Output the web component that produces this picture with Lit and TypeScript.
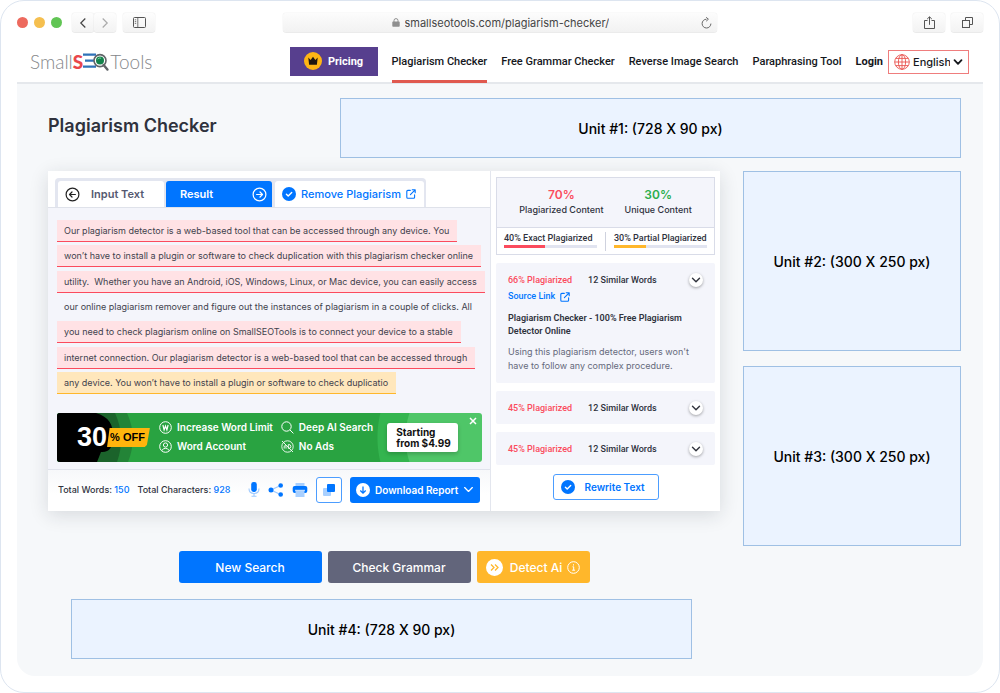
import { LitElement, html, css, svg } from "lit";
import { customElement, property } from "lit/decorators.js";
import { classMap } from "lit/directives/class-map.js";

type Mark = "exact" | "partial" | "none";

const lines: { text: string; mark: Mark }[] = [
  { text: "Our plagiarism detector is a web-based tool that can be accessed through any device. You", mark: "exact" },
  { text: "won’t have to install a plugin or software to check duplication with this plagiarism checker online", mark: "exact" },
  { text: "utility.  Whether you have an Android, iOS, Windows, Linux, or Mac device, you can easily access", mark: "exact" },
  { text: "our online plagiarism remover and figure out the instances of plagiarism in a couple of clicks. All", mark: "none" },
  { text: "you need to check plagiarism online on SmallSEOTools is to connect your device to a stable", mark: "exact" },
  { text: "internet connection. Our plagiarism detector is a web-based tool that can be accessed through", mark: "exact" },
  { text: "any device. You won’t have to install a plugin or software to check duplicatio", mark: "partial" },
];

const chevron = (w = 10, width = 1.6) => html`<svg width=${w} height=${w} viewBox="0 0 10 10" fill="none" stroke="currentColor" stroke-width=${width} stroke-linecap="round" stroke-linejoin="round" aria-hidden="true"><path d="M1.5 3.2 5 6.8 8.5 3.2" /></svg>`;

const checkDisc = html`<svg width="14" height="14" viewBox="0 0 14 14" aria-hidden="true"><circle cx="7" cy="7" r="7" fill="#0075ff" /><path d="M4.4 7.2 6.2 9 9.7 5.5" fill="none" stroke="#fff" stroke-width="1.4" stroke-linecap="round" stroke-linejoin="round" /></svg>`;

const arrowDisc = (left: boolean) => html`<svg width="15" height="15" viewBox="0 0 15 15" fill="none" stroke="currentColor" stroke-width="1.2" stroke-linecap="round" stroke-linejoin="round" aria-hidden="true"><circle cx="7.5" cy="7.5" r="6.4" />${left ? svg`<path d="M10.4 7.5H4.6M7 5 4.5 7.5 7 10" />` : svg`<path d="M4.6 7.5h5.8M8 5l2.5 2.5L8 10" />`}</svg>`;

const external = html`<svg width="10" height="10" viewBox="0 0 10 10" fill="none" stroke="currentColor" stroke-width="1.1" stroke-linecap="round" stroke-linejoin="round" aria-hidden="true"><path d="M4.3 1.4H1.8a1 1 0 0 0-1 1v5.8a1 1 0 0 0 1 1h5.8a1 1 0 0 0 1-1V5.7M6.2.8h3v3M9.1.9 4.4 5.6" /></svg>`;

@customElement("ad-unit")
export class AdUnit extends LitElement {
  @property() label = "";
  static styles = css`
    :host {
      display: flex;
      align-items: center;
      justify-content: center;
      box-sizing: border-box;
      border: 1px solid #9fc0e4;
      background: #ebf3ff;
      color: #000;
      font-size: 14px;
      font-weight: 500;
    }
  `;
  render() {
    return html`<span>${this.label}</span>`;
  }
}

@customElement("match-card")
export class MatchCard extends LitElement {
  @property() percent = "";
  @property({ type: Boolean }) open = false;
  static styles = css`
    :host {
      display: block;
      background: #f4f5fb;
      border-radius: 2px;
      padding: 5px 12px;
      font-size: 9px;
      color: #2f323d;
    }
    .head {
      display: flex;
      align-items: center;
      gap: 16px;
      min-height: 23px;
      font-family: Roboto, Inter, sans-serif;
      font-weight: 500;
      white-space: nowrap;
    }
    .percent { color: #fb4b5d; }
    .toggle {
      margin-left: auto;
      width: 14px;
      height: 14px;
      padding: 0;
      border: 0;
      border-radius: 50%;
      background: #fff;
      color: #33363f;
      box-shadow: 0 1px 3px rgba(0, 0, 0, 0.35);
      display: grid;
      place-items: center;
    }
    a {
      display: flex;
      align-items: center;
      gap: 5px;
      width: max-content;
      color: #0075ff;
      text-decoration: none;
      font-family: Roboto, Inter, sans-serif;
      font-weight: 500;
      line-height: 11px;
    }
    h3 {
      margin: 10px 0 0;
      font-family: Roboto, Inter, sans-serif;
      font-size: 9px;
      line-height: 13px;
      font-weight: 600;
    }
    p {
      margin: 7px 0 5px;
      font-size: 9px;
      line-height: 14px;
      color: #666a7c;
    }
  `;
  render() {
    return html`
      <div class="head">
        <span class="percent">${this.percent} Plagiarized</span>
        <span>12 Similar Words</span>
        <button class="toggle" aria-label="Toggle details">${chevron(10, 1.4)}</button>
      </div>
      ${this.open
        ? html`<a href="#source">Source Link ${external}</a>
            <h3>Plagiarism Checker - 100% Free Plagiarism Detector Online</h3>
            <p>Using this plagiarism detector, users won't have to follow any complex procedure.</p>`
        : null}
    `;
  }
}

@customElement("app-root")
export class AppRoot extends LitElement {
  static styles = css`
    :host {
      display: block;
      font-family: Inter, "Open Sans", sans-serif;
      color: #2f323d;
    }
    * { box-sizing: border-box; }
    button, input, select { font-family: inherit; }
    button { margin: 0; white-space: nowrap; }
    svg { flex: none; display: block; }
    .frame {
      min-height: 100vh;
      display: flex;
      flex-direction: column;
      border: 1px solid #dde5f0;
      border-radius: 24px;
      background: #fff;
      padding: 12px 16px 16px;
    }

    .toolbar {
      display: grid;
      grid-template-columns: 1fr 45% 1fr;
      align-items: center;
      height: 19px;
    }
    .side { display: flex; align-items: center; }
    .dots { display: flex; gap: 6px; margin-right: 10px; }
    .dot { width: 11px; height: 11px; border-radius: 50%; background: #ed6a5e; }
    .dot.amber { background: #f5bf4f; }
    .dot.green { background: #61c554; }
    .chrome {
      width: 32px;
      height: 19px;
      padding: 0;
      border: 0;
      border-radius: 3px;
      background: linear-gradient(#fdfdfd, #f3f3f3);
      box-shadow: 0 0 1px rgba(0, 0, 0, 0.25), 0 1px 0 rgba(0, 0, 0, 0.06);
      color: #555;
      display: grid;
      place-items: center;
    }
    .chrome.nav { width: 22px; }
    .chrome.panel { margin-left: 7px; }
    .end { justify-content: flex-end; gap: 6px; }
    .address {
      display: flex;
      align-items: center;
      height: 19px;
      padding: 0 5px;
      border-radius: 3px;
      background: linear-gradient(#fcfcfc, #f2f2f2);
      box-shadow: 0 0 1px rgba(0, 0, 0, 0.2), 0 1px 0 rgba(0, 0, 0, 0.06);
    }
    .location { flex: 1; display: flex; justify-content: center; align-items: center; gap: 5px; padding-left: 11px; }
    .location input {
      width: 204px;
      padding: 0;
      border: 0;
      outline: 0;
      background: none;
      color: #454545;
      font-size: 11px;
    }
    .reload { border: 0; background: none; padding: 0; color: #666; }

    header {
      display: flex;
      align-items: stretch;
      height: 52px;
      padding: 0 14px 0 13px;
      border-bottom: 2px solid #e5e8ec;
    }
    .logo {
      display: flex;
      align-items: center;
      padding-top: 8px;
      color: #85878a;
      font-family: Lato, sans-serif;
      font-weight: 300;
      font-size: 19px;
      text-decoration: none;
      margin-right: auto;
    }
    .logo b { color: #e9474b; font-weight: 900; }
    nav { display: flex; align-items: center; gap: 14px; white-space: nowrap; }
    nav a {
      color: #15171c;
      font-family: Roboto, Inter, sans-serif;
      font-size: 11px;
      font-weight: 500;
      text-decoration: none;
      height: 52px;
      line-height: 61px;
    }
    nav a.active { border-bottom: 3px solid #e0594f; }
    nav a.login { font-weight: 700; }
    nav a.pricing {
      height: 29px;
      width: 88px;
      line-height: 29px;
      display: flex;
      align-items: center;
      justify-content: center;
      gap: 6px;
      background: #573f8e;
      color: #fff;
      font-weight: 700;
      margin-top: 8px;
    }
    .language {
      display: flex;
      align-items: center;
      gap: 3px;
      height: 24px;
      width: 81px;
      padding: 0 5px;
      margin: 9px 0 0 -9px;
      border: 1px solid #ef7d7d;
      color: #15171c;
    }
    .language select {
      appearance: none;
      flex: 1;
      min-width: 0;
      border: 0;
      padding: 0;
      background: none;
      color: inherit;
      font-size: 11px;
      font-weight: 500;
    }

    main {
      flex: 1;
      background: #f6f8fa;
      border-radius: 0 0 18px 18px;
      padding: 14px 22px 17px 31px;
    }
    .top { display: flex; margin-bottom: 13px; }
    h1 { flex: 0 0 292px; margin: 0; font-size: 18px; line-height: 56px; font-weight: 600; }
    .wide { height: 60px; }
    .top .wide { flex: 1; }
    .bottom { margin: 16px 28px 0 23px; }
    .columns { display: grid; grid-template-columns: minmax(0, 1fr) 218px; gap: 23px; }
    .rail { display: flex; flex-direction: column; gap: 15px; }
    .box { height: 180px; }

    .checker {
      display: grid;
      grid-template-columns: minmax(0, 1fr) 230px;
      background: #fff;
      box-shadow: 0 4px 18px rgba(30, 35, 50, 0.14);
    }
    .editor { display: flex; flex-direction: column; }
    .tabs { padding: 7px 7px 0; border-bottom: 1px solid #dfe2ea; display: flex; }
    .tabset {
      display: flex;
      gap: 2px;
      padding: 3px 2px 0 3px;
      background: #e3e6f0;
      border-radius: 4px 4px 0 0;
    }
    .tab {
      display: flex;
      align-items: center;
      height: 26px;
      width: 106px;
      padding: 0 7px;
      border: 0;
      border-radius: 3px 3px 0 0;
      background: #fff;
      color: #555970;
      font-size: 11px;
      font-weight: 600;
      gap: 11px;
    }
    .tab.input svg { color: #222; }
    .tab.selected { background: #0075ff; color: #fff; justify-content: space-between; padding: 0 5px 0 14px; }
    .tab.remove { width: 149px; margin-left: 1px; gap: 5px; color: #0075ff; font-weight: 500; }
    .text { flex: 1; background: #f4f5fb; padding: 12px 8px 7px 9px; }
    .lines {
      display: flex;
      flex-direction: column;
      align-items: flex-start;
      justify-content: space-between;
      min-height: 174px;
    }
    .line {
      height: 22px;
      line-height: 21px;
      padding: 0 8px 0 7px;
      font-size: 9px;
      color: #3f424d;
      white-space: pre;
      border-bottom: 1px solid transparent;
    }
    .line.exact { background: #ffe2e5; border-color: #fb4b5d; }
    .line.partial { background: #ffe7bc; border-color: #ffb72b; }

    .banner {
      position: relative;
      display: flex;
      align-items: center;
      height: 49px;
      margin-top: 19px;
      border-radius: 3px;
      overflow: hidden;
      color: #fff;
      background:
        radial-gradient(circle at 100% 50%, #4fc668 0 76px, #34b54f 77px 104px, transparent 105px),
        #29a341;
    }
    .shades { position: absolute; left: 0; top: 0; }
    .deal { position: relative; display: flex; align-items: center; width: 102px; padding-left: 20px; font-family: "Liberation Sans", sans-serif; font-weight: 700; }
    .deal .big { font-size: 27px; }
    .deal .off {
      padding: 0 5px 0 3px;
      line-height: 19px;
      font-size: 11px;
      color: #000;
      background: #ffb50d;
      clip-path: polygon(6% 0, 100% 0, 93% 90%, 88% 100%, 0 100%);
      white-space: nowrap;
    }
    .perks { position: relative; display: grid; grid-template-columns: auto auto; gap: 5px 8px; padding-bottom: 2px; font-size: 10px; font-weight: 600; white-space: nowrap; }
    .perk { display: flex; align-items: center; gap: 5px; height: 14px; }
    .price {
      position: relative;
      margin-left: 14px;
      width: 71px;
      height: 29px;
      padding: 0 0 0 9px;
      border: 0;
      border-radius: 3px;
      background: #fff;
      color: #111;
      font-size: 10px;
      line-height: 11px;
      font-weight: 700;
      text-align: left;
      box-shadow: 0 2px 4px rgba(0, 0, 0, 0.2);
    }
    .close { position: absolute; right: 4px; top: 3px; border: 0; background: none; color: #fff; padding: 0; }

    .status {
      display: flex;
      align-items: center;
      height: 42px;
      padding: 0 10px 2px;
      border-top: 1px solid #e0e3ec;
      background: linear-gradient(#f7f8fa, #fff 60%);
      font-size: 9px;
      font-weight: 500;
      white-space: nowrap;
    }
    .status .count + .count { margin-left: 8px; }
    .count b { color: #0075ff; font-weight: 500; }
    .tools { display: flex; align-items: center; gap: 8px; margin-left: auto; }
    .tool { border: 0; background: none; padding: 0; }
    .tool.boxed { width: 26px; height: 26px; display: grid; place-items: center; border: 1px solid #4c9dff; border-radius: 3px; background: #fff; }
    .download {
      display: flex;
      align-items: center;
      gap: 5px;
      width: 130px;
      height: 26px;
      padding: 0 6px;
      border: 0;
      border-radius: 3px;
      background: #0075ff;
      color: #fff;
      font-size: 10px;
      font-weight: 600;
    }
    .download svg:last-child { margin-left: auto; }

    .report { display: flex; flex-direction: column; border-left: 1px solid #e3e6ee; padding: 6px 5px 10px; }
    .summary { border: 1px solid #d9dce8; margin-bottom: 8px; }
    .totals { display: flex; justify-content: center; gap: 21px; height: 50px; padding-top: 8px; background: #f4f5fb; border-bottom: 1px solid #d9dce8; text-align: center; font-size: 9px; font-weight: 500; white-space: nowrap; }
    .totals strong { display: block; font-size: 12px; line-height: 17px; font-weight: 600; margin-bottom: 1px; }
    .red { color: #fb4b5d; }
    .green-text { color: #2bae4d; }
    .split { display: flex; height: 26px; padding: 4px 7px 3px; font-family: Roboto, Inter, sans-serif; font-size: 9px; font-weight: 500; white-space: nowrap; }
    .split > div { flex: 1; line-height: 13px; }
    .split > div + div { border-left: 1px solid #cfd2de; padding-left: 8px; }
    .split > div:first-child { padding-right: 8px; }
    .bar { height: 3px; background: #e1e4f0; }
    .fill { height: 3px; background: #fb4b5d; }
    .fill.amber { background: #ffb72b; }
    .matches { display: flex; flex-direction: column; gap: 8px; }
    .rewrite {
      align-self: center;
      display: flex;
      align-items: center;
      gap: 10px;
      height: 26px;
      width: 106px;
      margin-top: 9px;
      padding: 0 7px;
      border: 1px solid #4c9dff;
      border-radius: 3px;
      background: #fff;
      color: #0075ff;
      font-size: 10px;
      font-weight: 600;
    }

    .actions { display: flex; justify-content: center; gap: 6px; margin-top: 40px; }
    .action { width: 143px; height: 32px; border: 0; border-radius: 3px; color: #fff; background: #0075ff; font-size: 12px; font-weight: 500; padding: 0; }
    .action.grey { background: #62657b; }
    .action.amber { display: flex; align-items: center; justify-content: center; gap: 5px; width: 113px; background: #ffb72b; }
    .action.amber svg:first-child { margin-right: 2px; }
  `;

  private renderToolbar() {
    return html`
      <div class="toolbar">
        <div class="side">
          <div class="dots"><span class="dot"></span><span class="dot amber"></span><span class="dot green"></span></div>
          <button class="chrome nav" aria-label="Back"><svg width="12" height="12" viewBox="0 0 12 12" fill="none" stroke="#444" stroke-width="1.2"><path d="M8.3 1.5 3.8 6l4.5 4.5" /></svg></button>
          <button class="chrome nav" aria-label="Forward"><svg width="12" height="12" viewBox="0 0 12 12" fill="none" stroke="#aaa" stroke-width="1.2"><path d="M3.7 1.5 8.2 6l-4.5 4.5" /></svg></button>
          <button class="chrome panel" aria-label="Sidebar"><svg width="13" height="11" viewBox="0 0 13 11" fill="none" stroke="currentColor"><rect x=".5" y=".5" width="12" height="10" rx="1" /><path d="M4.8.5v10M1.8 2.8h1.4M1.8 4.6h1.4M1.8 6.4h1.4" stroke-width=".8" /></svg></button>
        </div>
        <div class="address">
          <label class="location">
            <svg width="8" height="9" viewBox="0 0 8 9" aria-hidden="true"><rect x=".3" y="3.6" width="7.4" height="5.2" rx=".8" fill="#8f8f8f" /><path d="M2 4V2.6a2 2 0 0 1 4 0V4" fill="none" stroke="#8f8f8f" /></svg>
            <input type="text" aria-label="Address" .value=${"smallseotools.com/plagiarism-checker/"} />
          </label>
          <button class="reload" aria-label="Reload"><svg width="11" height="12" viewBox="0 0 11 12" fill="none" stroke="currentColor"><path d="M5.5 2.2a4.4 4.4 0 1 0 4.4 4.4" /><path d="M5.2.3 7.4 2.2 5.2 4.2" /></svg></button>
        </div>
        <div class="side end">
          <button class="chrome" aria-label="Share"><svg width="11" height="13" viewBox="0 0 11 13" fill="none" stroke="currentColor"><path d="M3.5 4.5h-3v8h10v-8h-3M5.5 8.8V1M3.2 3 5.5.8 7.8 3" /></svg></button>
          <button class="chrome" aria-label="Tabs"><svg width="11" height="11" viewBox="0 0 11 11" fill="none" stroke="currentColor"><rect x=".5" y="3.5" width="7" height="7" /><path d="M3.5 3.5v-3h7v7h-3" /></svg></button>
        </div>
      </div>
    `;
  }

  private renderHeader() {
    return html`
      <header>
        <a class="logo" href="#home"><span>Small</span><b>S</b><svg width="27" height="20" viewBox="0 0 27 20" aria-hidden="true">
            <path d="M0 3.6h13M2 9.6h10M0 15.6h13" stroke="#2f72b8" stroke-width="2.4" />
            <circle cx="17" cy="9.6" r="6" fill="#fff" stroke="#606468" stroke-width="1.6" />
            <circle cx="17" cy="9.6" r="4" fill="#13824b" />
            <path d="M14.6 8.2q1.5-1.8 3.5-1" stroke="#7ed0a1" fill="none" />
            <path d="m20.6 14 3.8 4.6" stroke="#606468" stroke-width="2.4" stroke-linecap="round" />
          </svg><span>Tools</span></a>
        <nav>
          <a class="pricing" href="#pricing"><svg width="18" height="18" viewBox="0 0 18 18" aria-hidden="true"><circle cx="9" cy="9" r="9" fill="#ffb614" /><path d="M4.3 5.6 6.6 8 9 4.8 11.4 8l2.3-2.4-.8 7.2H5.1Z" fill="#1f1710" /></svg>Pricing</a>
          <a class="active" href="#checker">Plagiarism Checker</a>
          <a href="#grammar">Free Grammar Checker</a>
          <a href="#image">Reverse Image Search</a>
          <a href="#paraphrase">Paraphrasing Tool</a>
          <a class="login" href="#login">Login</a>
          <label class="language">
            <svg width="16" height="16" viewBox="0 0 16 16" fill="none" stroke="#e9524f" stroke-width=".9" aria-hidden="true"><circle cx="8" cy="8" r="7.3" /><ellipse cx="8" cy="8" rx="3.6" ry="7.3" /><path d="M8 .7v14.6M.7 8h14.6M1.7 4.4h12.6M1.7 11.6h12.6" /></svg>
            <select aria-label="Language"><option>English</option></select>
            ${chevron(10, 1.8)}
          </label>
        </nav>
      </header>
    `;
  }

  private renderBanner() {
    return html`
      <div class="banner">
        <svg class="shades" width="80" height="49" viewBox="0 0 80 49" aria-hidden="true">
          <path d="M0 0H70Q81 24 71 49H0Z" fill="#238437" />
          <path d="M0 0H58Q69 24 60 49H0Z" fill="#1b632b" />
          <path d="M0 0H39Q57 5 56 24 56 40 44 39L40 49H0Z" fill="#000" />
        </svg>
        <div class="deal"><span class="big">30</span><span class="off">% OFF</span></div>
        <div class="perks">
          <span class="perk"><svg width="13" height="13" viewBox="0 0 13 13" fill="none" stroke="#fff"><circle cx="6.5" cy="6.5" r="5.8" /><path d="m3.9 4 1.2 5 1.4-4 1.4 4 1.2-5" stroke-width="1.2" /></svg>Increase Word Limit</span>
          <span class="perk"><svg width="13" height="13" viewBox="0 0 13 13" fill="none" stroke="#fff"><circle cx="5.5" cy="5.5" r="4.7" /><path d="m9 9 3.4 3.4" /></svg>Deep AI Search</span>
          <span class="perk"><svg width="13" height="13" viewBox="0 0 13 13" fill="none" stroke="#fff"><circle cx="6.5" cy="6.5" r="5.8" /><circle cx="6.5" cy="5" r="2.1" /><path d="M2.7 10.5q3.8-4.4 7.6 0" /></svg>Word Account</span>
          <span class="perk"><svg width="13" height="13" viewBox="0 0 13 13" fill="none" stroke="#fff" stroke-width=".9"><circle cx="6.5" cy="6.5" r="5.7" /><path d="m1 1 11 11M3.2 8.6V6.2q.9-1.6 1.8 0v2.4M7.3 4.6v3.8q3 .1 2.6-2.1T7.3 4.6" /></svg>No Ads</span>
        </div>
        <button class="price">Starting<br />from $4.99</button>
        <button class="close" aria-label="Close"><svg width="10" height="10" viewBox="0 0 10 10" stroke="currentColor" stroke-width="1.5"><path d="m2 2 6 6M8 2 2 8" /></svg></button>
      </div>
    `;
  }

  private renderStatus() {
    return html`
      <div class="status">
        <span class="count">Total Words: <b>150</b></span>
        <span class="count">Total Characters: <b>928</b></span>
        <div class="tools">
          <button class="tool" aria-label="Dictate"><svg width="12" height="15" viewBox="0 0 12 15"><rect x="3.2" y="0" width="5.6" height="10" rx="2.4" fill="#0075ff" /><path d="M1 6.5q0 5 5 5t5-5M6 11.5V14M3.5 14.3h5" fill="none" stroke="#9fcaff" stroke-width="1.1" /></svg></button>
          <button class="tool" aria-label="Share"><svg width="16" height="14" viewBox="0 0 16 14"><path d="M12.5 2.5 3 7l9.5 4.5" fill="none" stroke="#9fcaff" stroke-width="1.2" /><g fill="#0075ff"><circle cx="12.7" cy="2.5" r="2.3" /><circle cx="3" cy="7" r="2.5" /><circle cx="12.7" cy="11.5" r="2.3" /></g></svg></button>
          <button class="tool" aria-label="Print"><svg width="16" height="14" viewBox="0 0 16 14"><path d="M3.5 0h9v4h-9z" fill="#a9d0ff" /><rect x=".7" y="3" width="14.6" height="7" rx="2" fill="#0075ff" /><path d="M3.5 7.5h9V14h-9z" fill="#a9d0ff" /><path d="M3 7.3h10" stroke="#fff" stroke-width=".8" /></svg></button>
          <button class="tool boxed" aria-label="Copy"><svg width="14" height="14" viewBox="0 0 14 14"><rect x="1" y="5" width="8" height="8" rx="1" fill="#a9d0ff" /><rect x="5" y="1" width="8" height="8" rx="1" fill="#0075ff" /></svg></button>
          <button class="download"><svg width="14" height="14" viewBox="0 0 14 14"><circle cx="7" cy="7" r="7" fill="#fff" /><path d="M7 3.5v6.5M4.3 7.5 7 10.2l2.7-2.7" fill="none" stroke="#0075ff" stroke-width="1.3" /></svg>Download Report ${chevron(11, 1.1)}</button>
        </div>
      </div>
    `;
  }

  private renderReport() {
    return html`
      <section class="report">
        <div class="summary">
          <div class="totals">
            <div><strong class="red">70%</strong>Plagiarized Content</div>
            <div><strong class="green-text">30%</strong>Unique Content</div>
          </div>
          <div class="split">
            <div>40% Exact Plagiarized<div class="bar"><div class="fill" style="width:44%"></div></div></div>
            <div>30% Partial Plagiarized<div class="bar"><div class="fill amber" style="width:34%"></div></div></div>
          </div>
        </div>
        <div class="matches">
          <match-card percent="66%" open></match-card>
          <match-card percent="45%"></match-card>
          <match-card percent="45%"></match-card>
        </div>
        <button class="rewrite">${checkDisc} Rewrite Text</button>
      </section>
    `;
  }

  render() {
    return html`
      <div class="frame">
        ${this.renderToolbar()} ${this.renderHeader()}
        <main>
          <div class="top">
            <h1>Plagiarism Checker</h1>
            <ad-unit class="wide" label="Unit #1: (728 X 90 px)"></ad-unit>
          </div>
          <div class="columns">
            <div>
              <div class="checker">
                <section class="editor">
                  <div class="tabs">
                    <div class="tabset">
                      <button class="tab input">${arrowDisc(true)}Input Text</button>
                      <button class="tab selected">Result${arrowDisc(false)}</button>
                      <button class="tab remove">${checkDisc}Remove Plagiarism ${external}</button>
                    </div>
                  </div>
                  <div class="text">
                    <div class="lines">
                      ${lines.map((l) => html`<span class=${classMap({ line: true, [l.mark]: true })}>${l.text}</span>`)}
                    </div>
                    ${this.renderBanner()}
                  </div>
                  ${this.renderStatus()}
                </section>
                ${this.renderReport()}
              </div>
              <div class="actions">
                <button class="action">New Search</button>
                <button class="action grey">Check Grammar</button>
                <button class="action amber"><svg width="17" height="17" viewBox="0 0 17 17"><circle cx="8.5" cy="8.5" r="8.5" fill="#fff" /><path d="m5 5.5 3 3-3 3M9 5.5l3 3-3 3" fill="none" stroke="#ffb72b" stroke-width="1.3" /></svg>Detect Ai<svg width="13" height="13" viewBox="0 0 13 13" fill="none" stroke="#fff"><circle cx="6.5" cy="6.5" r="5.8" /><path d="M5.5 5.8h1.2v3.4M5.2 9.2h2.9M6.5 3.3v1.2" /></svg></button>
              </div>
              <ad-unit class="wide bottom" label="Unit #4: (728 X 90 px)"></ad-unit>
            </div>
            <aside class="rail">
              <ad-unit class="box" label="Unit #2: (300 X 250 px)"></ad-unit>
              <ad-unit class="box" label="Unit #3: (300 X 250 px)"></ad-unit>
            </aside>
          </div>
        </main>
      </div>
    `;
  }
}
